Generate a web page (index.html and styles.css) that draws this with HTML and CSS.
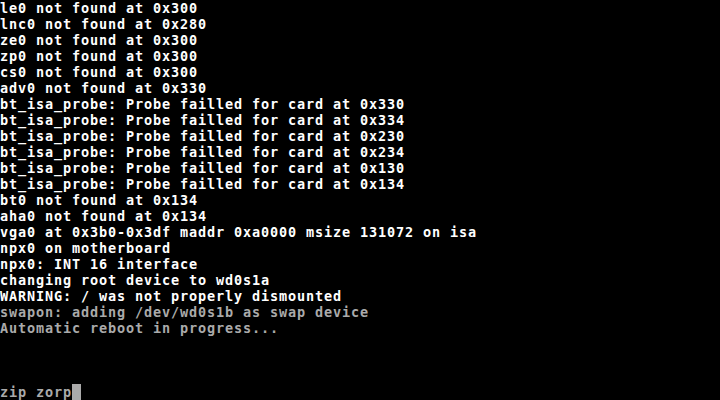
FILE: index.html
```html
<!DOCTYPE html>
<html lang="en">
<head>
    <meta charset="UTF-8">
    <meta name="viewport" content="width=device-width, initial-scale=1.0">
    <title>Console</title>
    <link rel="stylesheet" href="styles.css">
</head>
<body>
    <div class="screen">
        <div class="line bright">le0 not found at 0x300</div>
        <div class="line bright">lnc0 not found at 0x280</div>
        <div class="line bright">ze0 not found at 0x300</div>
        <div class="line bright">zp0 not found at 0x300</div>
        <div class="line bright">cs0 not found at 0x300</div>
        <div class="line bright">adv0 not found at 0x330</div>
        <div class="line bright">bt_isa_probe: Probe failled for card at 0x330</div>
        <div class="line bright">bt_isa_probe: Probe failled for card at 0x334</div>
        <div class="line bright">bt_isa_probe: Probe failled for card at 0x230</div>
        <div class="line bright">bt_isa_probe: Probe failled for card at 0x234</div>
        <div class="line bright">bt_isa_probe: Probe failled for card at 0x130</div>
        <div class="line bright">bt_isa_probe: Probe failled for card at 0x134</div>
        <div class="line bright">bt0 not found at 0x134</div>
        <div class="line bright">aha0 not found at 0x134</div>
        <div class="line bright">vga0 at 0x3b0-0x3df maddr 0xa0000 msize 131072 on isa</div>
        <div class="line bright">npx0 on motherboard</div>
        <div class="line bright">npx0: INT 16 interface</div>
        <div class="line bright">changing root device to wd0s1a</div>
        <div class="line bright">WARNING: / was not properly dismounted</div>
        <div class="line">swapon: adding /dev/wd0s1b as swap device</div>
        <div class="line">Automatic reboot in progress...</div>
        <div class="line"></div>
        <div class="line"></div>
        <div class="line"></div>
        <div class="line">zip zorp<span class="cursor"></span></div>
    </div>
</body>
</html>
```

FILE: styles.css
```css
* {
    margin: 0;
    padding: 0;
    box-sizing: border-box;
}

html, body {
    background-color: #000000;
}

body {
    width: 720px;
    height: 400px;
    overflow: hidden;
}

/* 80x25 text mode: 9px cells, 16px rows */
.screen {
    font-family: 'DejaVu Sans Mono', monospace;
    font-size: 13.5px;
    letter-spacing: 0.873px;
    font-weight: bold;
    color: #aaaaaa;
    display: flex;
    flex-direction: column;
}

.line {
    height: 16px;
    line-height: 16px;
    white-space: pre;
}

.bright {
    color: #ffffff;
}

.cursor {
    display: inline-block;
    width: 9px;
    height: 16px;
    vertical-align: top;
    background-color: #aaaaaa;
}
```
